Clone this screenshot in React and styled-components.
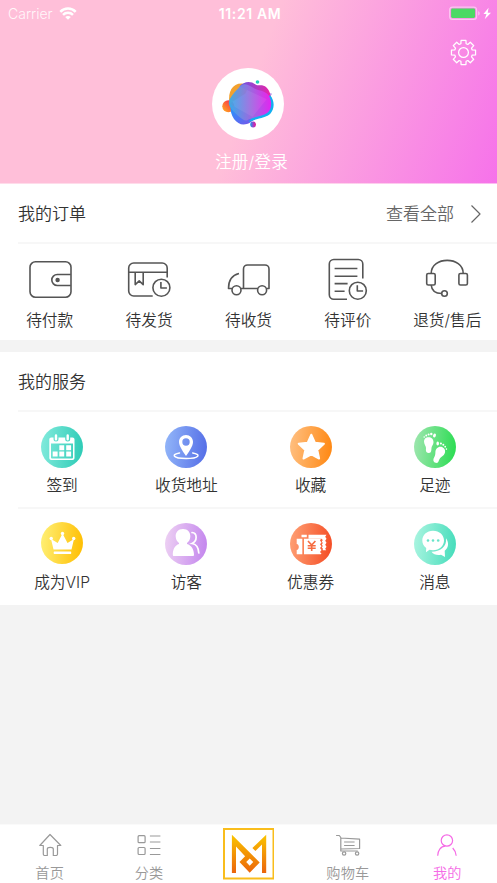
import React from "react";
import styled, { createGlobalStyle } from "styled-components";

const GlobalStyle = createGlobalStyle`
  * { box-sizing: border-box; }
  body { margin: 0; background: #f3f3f3; }
  svg { display: block; flex: none; }
`;

const Screen = styled.div`
  display: flex;
  flex-direction: column;
  height: 883px;
  overflow: hidden;
  background: #f3f3f3;
  color: #333;
  font-family: "Inter", "Noto Sans CJK SC", sans-serif;
  font-weight: 350;
`;

const Hero = styled.header`
  height: 184px;
  flex: none;
  display: flex;
  flex-direction: column;
  color: #fff;
  background: linear-gradient(110deg, #ffbfd9 50%, #f672ea 100%);
  border-bottom: 1px solid rgba(255, 255, 255, 0.45);
`;

const StatusBar = styled.div`
  display: grid;
  grid-template-columns: 1fr auto 1fr;
  align-items: center;
  height: 25px;
  padding: 0 5px 0 8px;
  font-size: 14px;
  line-height: 25px;
`;

const StatusGroup = styled.div`
  display: flex;
  align-items: center;
  gap: ${(p) => p.$gap}px;
  justify-content: ${(p) => (p.$end ? "flex-end" : "flex-start")};
  color: rgba(255, 255, 255, 0.88);
`;

const Clock = styled.div`
  font-weight: 600;
  font-size: 14px;
  letter-spacing: 0.6px;
  padding-top: 1px;
`;

const Settings = styled.div`
  display: flex;
  justify-content: flex-end;
  height: 43px;
  padding: 14px 20px 0 0;
`;

const Profile = styled.div`
  display: flex;
  flex-direction: column;
  align-items: center;
`;

const Avatar = styled.div`
  width: 72px;
  height: 72px;
  margin: -0.5px 1px 0 0;
  border-radius: 50%;
  background: #fff;
`;

const Login = styled.div`
  padding-left: 6px;
  margin-top: 10px;
  font-size: 16.5px;
  line-height: 24px;
  letter-spacing: 0.2px;
`;

const Panel = styled.section`
  flex: none;
  height: ${(p) => p.$height}px;
  margin-bottom: ${(p) => p.$gap || 0}px;
  background: #fff;
`;

const PanelHead = styled.div`
  display: flex;
  align-items: center;
  height: 60px;
  margin-left: 18px;
  padding: 1px 15px 0 0;
  border-bottom: 2px solid #f7f7f7;
`;

const Title = styled.h2`
  margin: 0;
  flex: 1;
  font-size: 17px;
  font-weight: inherit;
  line-height: 24px;
  padding-top: 1px;
`;

const More = styled.div`
  display: flex;
  align-items: center;
  gap: 16px;
  font-size: 17px;
  line-height: 24px;
  color: #666;
  padding-top: 1px;
`;

const Row = styled.div`
  display: grid;
  grid-template-columns: repeat(${(p) => p.$cols}, 1fr);
  padding-top: ${(p) => p.$top}px;
`;

const Cell = styled.div`
  display: flex;
  flex-direction: column;
  align-items: center;
`;

const Label = styled.span`
  margin-top: ${(p) => p.$top}px;
  font-size: 15.7px;
  line-height: 24px;
  white-space: nowrap;
`;

const Divider = styled.div`
  height: 2px;
  margin-left: 18px;
  background: #f7f7f7;
`;

const TabBar = styled.nav`
  flex: none;
  display: grid;
  grid-template-columns: repeat(5, 1fr);
  height: 59px;
  margin-top: auto;
  background: #fff;
  border-top: 1px solid #fafafa;
`;

const Tab = styled.div`
  display: flex;
  flex-direction: column;
  align-items: center;
  padding-top: ${(p) => (p.$logo ? 3 : 6)}px;
  color: ${(p) => (p.$active ? "#f56be6" : "#999")};
  font-size: 14.2px;
  line-height: 20px;
  letter-spacing: 0.2px;
`;

const TabText = styled.span`
  margin-top: 4px;
`;

const Line = styled.svg`
  fill: none;
  stroke: ${(p) => p.$color || "currentColor"};
  stroke-width: ${(p) => p.$weight || 1.5};
  stroke-linejoin: round;
  stroke-linecap: ${(p) => p.$cap || "butt"};
`;

const OrderIcon = ({ x, children }) => (
  <Line width="46" height="46" viewBox={`${x - 23} 256 46 46`} $color="#555" $weight={1.6}>
    {children}
  </Line>
);

const WifiIcon = () => (
  <svg width="18" height="13" viewBox="0 0 18 13" fill="none" stroke="#fff" strokeWidth="2.5">
    <path d="M1.3 4.9C5.6.5 12.4.5 16.7 4.9" />
    <path d="M4 7.9c2.8-2.8 7.2-2.8 10 0" />
    <path d="M9 12.7 6.2 10c1.6-1.5 4-1.5 5.6 0z" fill="#fff" stroke="none" />
  </svg>
);

const BatteryIcon = () => (
  <svg width="43" height="15" viewBox="0 0 43 15" fill="none">
    <rect x=".6" y="1.1" width="27" height="12.3" rx="3" stroke="#fff" strokeOpacity=".5" strokeWidth="1.1" />
    <rect x="2.1" y="2.6" width="24" height="9.3" rx="1.4" fill="#4cd964" />
    <path d="M29.2 5.2c2 .5 2 3.7 0 4.2z" fill="#fff" fillOpacity=".5" />
    <path d="M39.6 1.7 34.5 8h3l-1.8 5.3L42 6.7h-3.3z" fill="#fff" />
  </svg>
);

const gearPath = () => {
  const pts = [];
  for (let i = 0; i < 8; i += 1) {
    const a = (i * Math.PI) / 4;
    [[-0.29, 9.1], [-0.2, 12.3], [0.2, 12.3], [0.29, 9.1]].forEach(([d, r]) => {
      pts.push(`${(13.5 + r * Math.sin(a + d)).toFixed(2)} ${(13.5 - r * Math.cos(a + d)).toFixed(2)}`);
    });
  }
  return `M${pts.join("L")}Z`;
};

const GearIcon = () => (
  <Line width="27" height="27" viewBox="0 0 27 27" $color="#fff" $weight={1.25}>
    <path d={gearPath()} />
    <circle cx="13.5" cy="13.5" r="4.9" />
  </Line>
);

const AvatarArt = () => (
  <svg width="72" height="72" viewBox="212.5 67.5 72 72">
    <defs>
      <linearGradient id="body"><stop stopColor="#35aee9" /><stop offset=".5" stopColor="#9a6de0" /><stop offset="1" stopColor="#f01cf0" /></linearGradient>
      <linearGradient id="blue" x2="1" y2="1"><stop stopColor="#1e9cff" /><stop offset="1" stopColor="#7d4fe8" /></linearGradient>
      <linearGradient id="rose"><stop stopColor="#6557e5" /><stop offset="1" stopColor="#f020a5" /></linearGradient>
      <linearGradient id="sun" x1="1" x2="0" y2="1"><stop stopColor="#fb1658" /><stop offset="1" stopColor="#ffb619" /></linearGradient>
      <linearGradient id="dot"><stop stopColor="#169eed" /><stop offset=".55" stopColor="#a13dc7" /><stop offset="1" stopColor="#ef168d" /></linearGradient>
    </defs>
    <circle cx="228.8" cy="105.8" r="6" fill="url(#sun)" />
    <path d="M230 103c-2-12 3-20 12-20 7 0 7 4 4 10z" fill="#f3a12e" />
    <path d="M231 104c-1 12 6 20 13 20 5 0 8-3 12-6z" fill="url(#blue)" />
    <path d="M240 86c4-5 11-6 16-2 3 2 7-1 11 3 3 3 5 8 5 14z" fill="url(#rose)" />
    <path d="M270.500 94.500c5 6 4.500 14 .5 18.500-4 4.500-13 4.500-22 8.500z" fill="#12aff0" />
    <path d="M230.300 98.500c3-5.500 7-9 10-12.500 4-4 8-2 13 1 6 4 12 2.500 16 8 3 5 3.500 13-1 17-5 4-14 4-21 8-4 1-14-9-17-14-1.500-2.500-1.200-5 0-7.500z" fill="url(#body)" opacity=".94" />
    <circle cx="258" cy="81.5" r="1.8" fill="#23cfbd" />
    <circle cx="271.4" cy="93.6" r=".9" fill="#b383e5" />
    <circle cx="253.6" cy="124" r="2.9" fill="url(#dot)" />
  </svg>
);

const ORDERS = [
  { label: "待付款", icon: <OrderIcon x={49.7}>
    <rect x="29.7" y="261.7" width="41" height="35.5" rx="5.5" />
    <path d="M70.5 274.5H57a5.5 5.5 0 0 0 0 11h13.5" />
    <circle cx="57.3" cy="280" r="2.2" fill="#555" stroke="none" />
  </OrderIcon> },
  { label: "待发货", icon: <OrderIcon x={149.1}>
    <path d="M167.3 277.5V268a5 5 0 0 0-5-5h-28.5a5 5 0 0 0-5 5v23a5 5 0 0 0 5 5h19" />
    <path d="M128.8 272.3h38.5M135.3 272.3v12.3l4-3.8 4 3.8v-12.3" />
    <circle cx="161.5" cy="287.7" r="8.5" />
    <path d="M161 282v6h6" />
  </OrderIcon> },
  { label: "待收货", icon: <OrderIcon x={248.5}>
    <path d="M239.5 273.5c-6.5 1.5-10.5 7-10.5 15h3.5M241.5 288.5h17M267 288.5h2.5V269a4 4 0 0 0-4-4H248a4 4 0 0 0-4 4v19.5" />
    <circle cx="237" cy="290.3" r="4.5" />
    <circle cx="262.6" cy="290.3" r="4.5" />
  </OrderIcon> },
  { label: "待评价", icon: <OrderIcon x={347.9}>
    <path d="M362.7 278.5V264a4.5 4.5 0 0 0-4.5-4.5h-24.5a4.5 4.5 0 0 0-4.5 4.5v30.7a4.5 4.5 0 0 0 4.5 4.5h13.2" />
    <path d="M334.5 268.5h22.8M334.5 276.3h22.8M334.5 283.6h13M334.5 291.2h10" />
    <circle cx="357.7" cy="290.7" r="8.5" />
    <path d="M357.2 285.3v5.7h5.8" />
  </OrderIcon> },
  { label: "退货/售后", icon: <OrderIcon x={447.3}>
    <rect x="427" y="273.5" width="8.500" height="11.5" rx="1.6" />
    <rect x="459.2" y="273.5" width="8.500" height="11.5" rx="1.6" />
    <path d="M431.500 273.500c0-17.500 32-17.500 32 0M431.500 285c.5 6 5 8.500 10.500 8.500" />
    <circle cx="444.800" cy="293.500" r="2.800" />
  </OrderIcon> },
];

const Badge = ({ id, from, to, children }) => (
  <svg width="42" height="42" viewBox="0 0 42 42">
    <defs><linearGradient id={id} y2=".1"><stop stopColor={from} /><stop offset="1" stopColor={to} /></linearGradient></defs>
    <circle cx="21" cy="21" r="21" fill={`url(#${id})`} />
    {children}
  </svg>
);

const VipBadge = styled.div`
  margin: -1px 0 1px;
`;

const SERVICES = [
  { label: "签到", icon: <Badge id="g1" from="#84ebdd" to="#32cdb8">
    <path fill="#fff" fillRule="evenodd" d="M10.300 11.500h2.200v1.500a2.500 2.500 0 0 0 5 0v-1.500h6.700v1.500a2.500 2.500 0 0 0 5 0v-1.500h2.300c1.200 0 2 .8 2 2v18.500c0 1.200-.8 2-2 2H10.300c-1.200 0-2-.8-2-2V13.500c0-1.200.8-2 2-2zM10 17.500v14a1 1 0 0 0 1 1h20a1 1 0 0 0 1-1v-14z" />
    <path stroke="#fff" strokeWidth="2.400" strokeLinecap="round" d="M15 9.500v3.700M26.700 9.500v3.700" />
    <path fill="#fff" d="M18.300 19.300h4.900v4.900h-4.900zM25.200 19.300h4.900v4.900h-4.900zM11.700 25.500h4.900v4.900h-4.900zM18.300 25.500h4.900v4.900h-4.900zM25.200 25.500h4.900v4.900h-4.900z" />
  </Badge> },
  { label: "收货地址", icon: <Badge id="g2" from="#93b7f9" to="#5872e8">
    <path fill="#fff" fillRule="evenodd" d="M21 9c-4 0-7 3-7 7 0 4.500 5 11 7 14 2-3 7-9.500 7-14 0-4-3-7-7-7zm0 3.300a3.700 3.700 0 1 1 0 7.400 3.700 3.700 0 0 1 0-7.400z" />
    <path fill="none" stroke="#fff" strokeWidth="1.500" strokeLinecap="round" d="M14.500 27c-4 .7-6 2-5 3.200 2.500 3 20.500 3 23.200 0 1-1.200-1-2.500-5-3.200" />
  </Badge> },
  { label: "收藏", icon: <Badge id="g3" from="#ffc184" to="#ff8b18">
    <path fill="#fff" stroke="#fff" strokeWidth="2" strokeLinejoin="round" d="M21.300 8.700l3.700 8.100 8.900 1-6.600 6.100 1.800 8.600-7.800-4.200-7.800 4.200 1.800-8.600-6.600-6.100 8.900-1z" />
  </Badge> },
  { label: "足迹", icon: <Badge id="g4" from="#a1e6b1" to="#31dd57">
    <g fill="#fff">
      <path d="M12.200 11.700c3.500-1.500 7.500.5 7.300 4.500-.1 2.500-1.800 3.500-2 5.500-.2 2.500 0 5-2.500 5.300-3 .3-3.300-2.500-3-4.700.3-2-2.200-4-2-7 .1-1.700.9-3 2.200-3.600z" />
      <path d="M28.500 21.200c3.200 1.500 3.300 5.500 1.300 7.800-1.500 1.700-3.500 2-4.500 4.500-.8 2.200-1.300 3.800-3.600 3.300-2.800-.7-2.700-3.300-1.600-5.300 1-2 1.200-2.700 1.300-5.300.1-4 3.600-6.600 7.100-5z" />
      <ellipse cx="20.500" cy="9.500" rx="1.400" ry="2" transform="rotate(15 20.500 9.500)" />
      <circle cx="17.300" cy="8" r="1.200" /><circle cx="14.600" cy="8.400" r="1" /><circle cx="12.200" cy="9.500" r=".9" /><circle cx="10.200" cy="11" r=".8" />
      <ellipse cx="23.700" cy="17.500" rx="1.300" ry="2" />
      <circle cx="26.900" cy="17.500" r="1.100" /><circle cx="29.300" cy="18.700" r="1" /><circle cx="31.200" cy="20.700" r=".9" /><circle cx="32.400" cy="23.100" r=".8" />
    </g>
  </Badge> },
];

const MEMBERS = [
  { label: "成为VIP", icon: <VipBadge><Badge id="g5" from="#fff178" to="#ffc108">
    <g fill="#fff" transform="translate(0 -1)">
      <path d="M12.500 28.500 10 18l6.700 4 4.800-9.500 5 9.500L33 18l-2.500 10.500z" />
      <rect x="12.700" y="30.500" width="17.500" height="2.400" rx=".6" />
      <circle cx="10.200" cy="17.500" r="1.700" /><circle cx="21.500" cy="12.500" r="1.700" /><circle cx="32.700" cy="17.500" r="1.700" />
    </g>
  </Badge></VipBadge> },
  { label: "访客", icon: <Badge id="g6" from="#eed2f3" to="#c68aee">
    <path fill="#fff" d="M18 6c4.700 0 7.700 3.400 7.300 7.800-.2 2.800-1.400 5-3.300 6.200v1c4.300 1.200 7 5.500 7 10.800 0 .8-.4 1.200-1.200 1.200H9c-.8 0-1.200-.4-1.200-1.200C7.800 26.500 10 22.200 14 21v-1c-1.900-1.200-3.100-3.400-3.300-6.200C10.300 9.400 13.300 6 18 6z" />
    <path fill="none" stroke="#fff" strokeWidth="1.700" strokeLinecap="round" d="M27 9.500c5.500.5 5.500 8.500 0 11 4.500.7 6.500 4.300 6.800 9.500" />
  </Badge> },
  { label: "优惠券", icon: <Badge id="g7" from="#ffa276" to="#f55129">
    <path fill="#fff" d="M11.500 11.700h5.300v2.500h-5.300zM18.500 11.700h18l-1.300 2.100 1.300 2-1.300 2 1.300 2-1.300 2 1.300 2-1.300 2 1 1.500h-3.400v-1.800l-1-1 1-1.500-1-1.500 1-1.500-1-1.500 1-1.500-1.300-1.200H18.500z" />
    <path fill="#fff" d="M6.700 15.700h5.600v15.500H6.700v-4.300c2.800-.2 2.800-5.700 0-6zM14 15.700h17l-1 1.900 1.500 1.800-1.500 1.900 1.500 1.900-1.500 1.900 1.500 1.900-1.500 1.900 1.500 1.800-.8.500H14z" />
    <path fill="none" stroke="#f66d42" strokeWidth="1.600" d="m18 18 3.700 4 3.700-4M21.700 22v6M17.700 22.700h8M17.700 25.300h8" />
  </Badge> },
  { label: "消息", icon: <Badge id="g8" from="#acf5e1" to="#4bdebd">
    <path fill="#fff" d="M19 7.700c6.500 0 11 4.300 11 9.800s-4.700 9.700-11 9.700c-1.300 0-2.500-.2-3.500-.5L12 29.300l.2-4.200C9.700 23.300 8.300 20.600 8.300 17.500c0-5.500 4.500-9.800 10.700-9.800z" />
    <path fill="#fff" d="M32 15.200c3.300 4.500 2.500 9.500-1.300 12.600l.3 6.200-4-2.300c-4 .8-7.500-.3-9.500-3 7.800.2 15.800-4.800 14.500-13.500z" />
    <g fill="#68e4c9"><circle cx="14" cy="17.500" r="1.300" /><circle cx="19" cy="17.500" r="1.300" /><circle cx="24.200" cy="17.500" r="1.300" /></g>
  </Badge> },
];

const TabIcon = ({ x, color, children }) => (
  <Line width="28" height="28" viewBox={`${x - 14} 831 28 28`} $color={color} $weight={1.2}>
    {children}
  </Line>
);

const LogoIcon = () => (
  <svg width="52" height="52" viewBox="221.800 828 52 52">
    <defs><linearGradient id="logo" gradientUnits="userSpaceOnUse" x1="0" y1="835" x2="0" y2="873"><stop stopColor="#fac400" /><stop offset="1" stopColor="#eb640b" /></linearGradient></defs>
    <rect x="223.800" y="829" width="49.500" height="49.500" fill="#fff" stroke="#f9bd1c" strokeWidth="2" />
    <g fill="url(#logo)">
      <path fillRule="evenodd" d="M231.700 834.700 259.500 862.500 249.500 872.700 239.300 862 244.900 856.300 235.800 846.500V873h-4.100zM249.500 858.500 246 862l3.500 3.700 3.500-3.700z" />
      <path d="M266 834.700V873h-4.200v-28.500L255.200 851l-3-3z" />
    </g>
  </svg>
);

const Items = ({ items, cols, top, gap }) => (
  <Row $cols={cols} $top={top}>
    {items.map(({ label, icon }) => (
      <Cell key={label}>
        {icon}
        <Label $top={gap}>{label}</Label>
      </Cell>
    ))}
  </Row>
);

export default function App() {
  return (
    <Screen>
      <GlobalStyle />
      <Hero>
        <StatusBar>
          <StatusGroup $gap={6}>Carrier <WifiIcon /></StatusGroup>
          <Clock>11:21 AM</Clock>
          <StatusGroup $end><BatteryIcon /></StatusGroup>
        </StatusBar>
        <Settings><GearIcon /></Settings>
        <Profile>
          <Avatar><AvatarArt /></Avatar>
          <Login>注册/登录</Login>
        </Profile>
      </Hero>
      <Panel $height={156} $gap={12}>
        <PanelHead>
          <Title>我的订单</Title>
          <More>
            查看全部
            <Line width="12" height="20" viewBox="0 0 12 20" $weight={1.2}>
              <path d="M1.500 1.500 10 10l-8.500 8.500" />
            </Line>
          </More>
        </PanelHead>
        <Items items={ORDERS} cols={5} top={12} gap={7} />
      </Panel>
      <Panel $height={253}>
        <PanelHead><Title>我的服务</Title></PanelHead>
        <Items items={SERVICES} cols={4} top={14} gap={6} />
        <Row $cols={1} $top={9}>
          <Divider />
          <Items items={MEMBERS} cols={4} top={14} gap={6} />
        </Row>
      </Panel>
      <TabBar>
        <Tab>
          <TabIcon x={49.7}>
            <path d="M43 845.500h-3.500L49.700 834.500 60.500 845.500H57.200V854a1.500 1.500 0 0 1-1.500 1.500H53V849c0-2.300-6-2.300-6 0v6.500h-2.500A1.500 1.500 0 0 1 43 854z" />
          </TabIcon>
          <TabText>首页</TabText>
        </Tab>
        <Tab>
          <TabIcon x={149.1}>
            <rect x="138.200" y="835.700" width="7" height="7" rx="1" />
            <rect x="138.200" y="847.500" width="7" height="7" rx="1" />
            <path d="M150 836h10.500M150 842h10.500M150 848.500h10.500M150 854.500h10.500" />
          </TabIcon>
          <TabText>分类</TabText>
        </Tab>
        <Tab $logo><LogoIcon /></Tab>
        <Tab>
          <TabIcon x={347.9}>
            <path d="M336 835.500h3.200l1.500 2V851h17M340.700 838l18.800 1.200v9.300l-18.800.5M344 842h10.500M344 845.500h10.500" />
            <circle cx="344" cy="853.500" r="1.700" /><circle cx="357" cy="853.500" r="1.700" />
          </TabIcon>
          <TabText>购物车</TabText>
        </Tab>
        <Tab $active>
          <TabIcon x={447.3}>
            <circle cx="447.200" cy="840.500" r="5.700" />
            <path d="M438 855.700c0-4.700 3-9.500 7.500-9.500M453 848c2 2 3.300 4.700 3.500 7.700" />
          </TabIcon>
          <TabText>我的</TabText>
        </Tab>
      </TabBar>
    </Screen>
  );
}
